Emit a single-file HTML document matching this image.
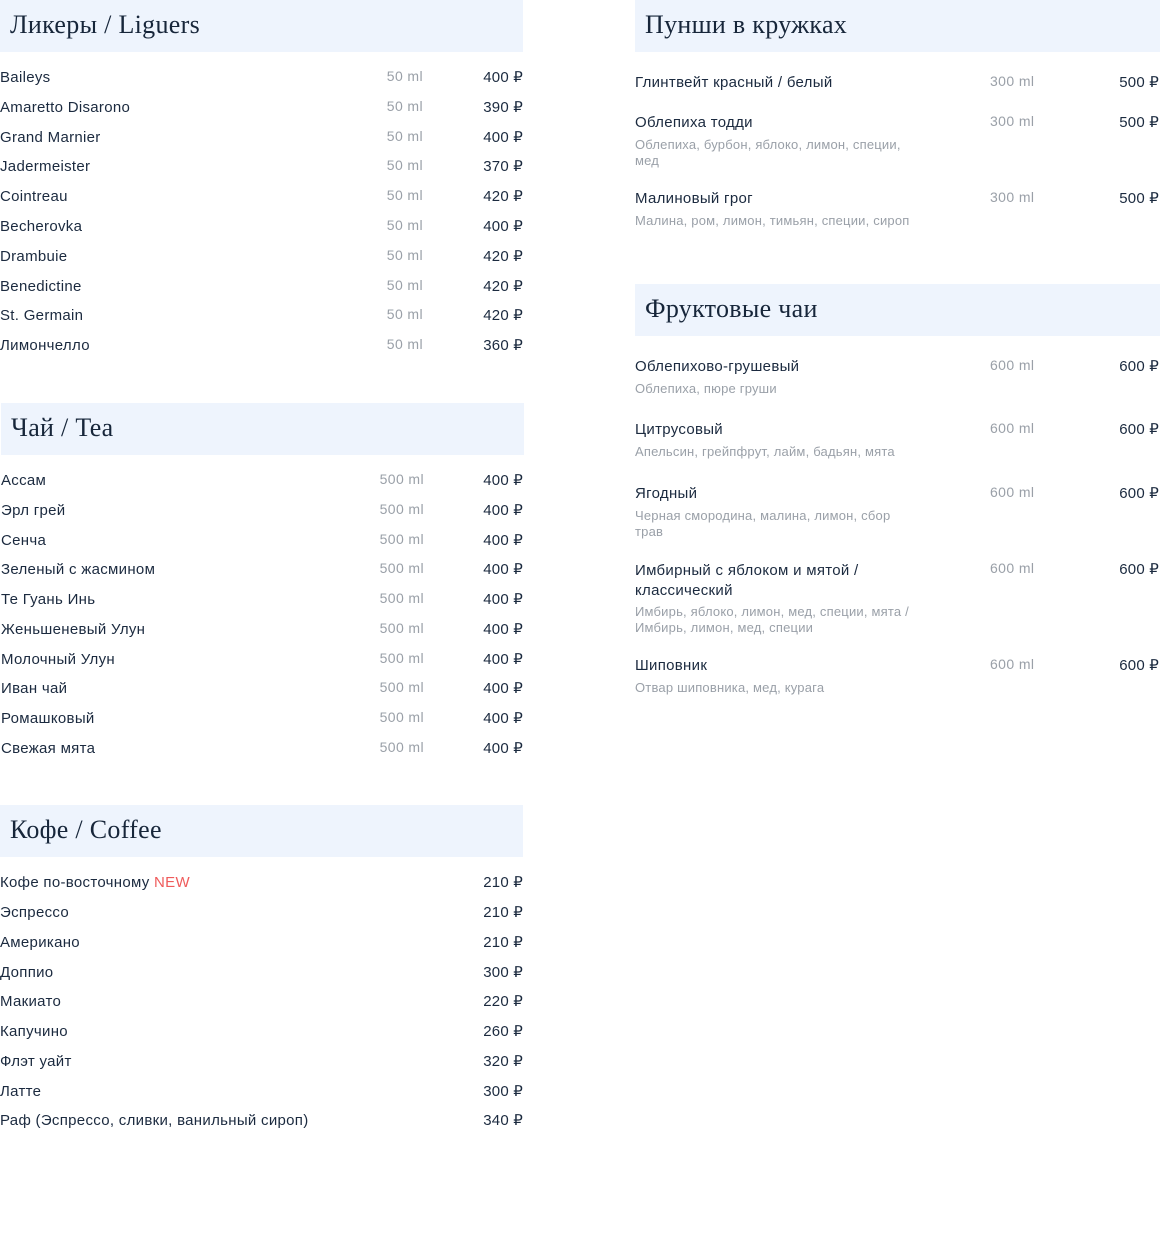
<!DOCTYPE html>
<html><head><meta charset="utf-8">
<style>
html,body{margin:0;padding:0;background:#fff;width:1160px;height:1237px;overflow:hidden;position:relative;font-family:"Liberation Sans","Noto Sans CJK SC",sans-serif;color:#1b2a3f}
.h{position:absolute;background:#eef4fd;height:52px}
.h span{position:absolute;left:10px;top:9px;font-family:"Liberation Serif","Noto Serif CJK SC",serif;font-size:26px;line-height:32px;color:#17263a;letter-spacing:0.3px}
.n{position:absolute;font-size:15px;line-height:18px;white-space:nowrap;letter-spacing:0.3px;margin-top:1px}
.m{position:absolute;font-size:14px;line-height:18px;color:#9aa0a8;white-space:nowrap;letter-spacing:0.4px;margin-top:1px}
.p{position:absolute;font-size:15px;line-height:18px;white-space:nowrap;text-align:right;margin-top:1px;letter-spacing:0.2px}
.d{position:absolute;font-size:13px;line-height:16px;color:#9aa0a8;width:276px;letter-spacing:0.2px}
.L{left:0}
.lm{right:737px}
.lp{right:637px}
.R{left:635px}
.rm{left:990px}
.rp{right:1px}
.new{color:#ef5b5b}
</style></head><body>

<div class="h" style="left:0;top:0;width:523px"><span>Ликеры / Liguers</span></div>
<div class="n L" style="top:68px">Baileys</div><div class="m lm" style="top:66px">50 ml</div><div class="p lp" style="top:68px">400 ₽</div>
<div class="n L" style="top:98px">Amaretto Disarono</div><div class="m lm" style="top:96px">50 ml</div><div class="p lp" style="top:98px">390 ₽</div>
<div class="n L" style="top:128px">Grand Marnier</div><div class="m lm" style="top:126px">50 ml</div><div class="p lp" style="top:128px">400 ₽</div>
<div class="n L" style="top:157px">Jadermeister</div><div class="m lm" style="top:155px">50 ml</div><div class="p lp" style="top:157px">370 ₽</div>
<div class="n L" style="top:187px">Cointreau</div><div class="m lm" style="top:185px">50 ml</div><div class="p lp" style="top:187px">420 ₽</div>
<div class="n L" style="top:217px">Becherovka</div><div class="m lm" style="top:215px">50 ml</div><div class="p lp" style="top:217px">400 ₽</div>
<div class="n L" style="top:247px">Drambuie</div><div class="m lm" style="top:245px">50 ml</div><div class="p lp" style="top:247px">420 ₽</div>
<div class="n L" style="top:277px">Benedictine</div><div class="m lm" style="top:275px">50 ml</div><div class="p lp" style="top:277px">420 ₽</div>
<div class="n L" style="top:306px">St. Germain</div><div class="m lm" style="top:304px">50 ml</div><div class="p lp" style="top:306px">420 ₽</div>
<div class="n L" style="top:336px">Лимончелло</div><div class="m lm" style="top:334px">50 ml</div><div class="p lp" style="top:336px">360 ₽</div>

<div class="h" style="left:1px;top:403px;width:523px"><span>Чай / Tea</span></div>
<div class="n" style="left:1px;top:471px">Ассам</div><div class="m lm" style="top:469px;right:736px">500 ml</div><div class="p lp" style="top:471px">400 ₽</div>
<div class="n" style="left:1px;top:501px">Эрл грей</div><div class="m lm" style="top:499px;right:736px">500 ml</div><div class="p lp" style="top:501px">400 ₽</div>
<div class="n" style="left:1px;top:531px">Сенча</div><div class="m lm" style="top:529px;right:736px">500 ml</div><div class="p lp" style="top:531px">400 ₽</div>
<div class="n" style="left:1px;top:560px">Зеленый с жасмином</div><div class="m lm" style="top:558px;right:736px">500 ml</div><div class="p lp" style="top:560px">400 ₽</div>
<div class="n" style="left:1px;top:590px">Те Гуань Инь</div><div class="m lm" style="top:588px;right:736px">500 ml</div><div class="p lp" style="top:590px">400 ₽</div>
<div class="n" style="left:1px;top:620px">Женьшеневый Улун</div><div class="m lm" style="top:618px;right:736px">500 ml</div><div class="p lp" style="top:620px">400 ₽</div>
<div class="n" style="left:1px;top:650px">Молочный Улун</div><div class="m lm" style="top:648px;right:736px">500 ml</div><div class="p lp" style="top:650px">400 ₽</div>
<div class="n" style="left:1px;top:679px">Иван чай</div><div class="m lm" style="top:677px;right:736px">500 ml</div><div class="p lp" style="top:679px">400 ₽</div>
<div class="n" style="left:1px;top:709px">Ромашковый</div><div class="m lm" style="top:707px;right:736px">500 ml</div><div class="p lp" style="top:709px">400 ₽</div>
<div class="n" style="left:1px;top:739px">Свежая мята</div><div class="m lm" style="top:737px;right:736px">500 ml</div><div class="p lp" style="top:739px">400 ₽</div>

<div class="h" style="left:0;top:805px;width:523px"><span>Кофе / Coffee</span></div>
<div class="n L" style="top:873px">Кофе по-восточному <span class="new">NEW</span></div><div class="p lp" style="top:873px">210 ₽</div>
<div class="n L" style="top:903px">Эспрессо</div><div class="p lp" style="top:903px">210 ₽</div>
<div class="n L" style="top:933px">Американо</div><div class="p lp" style="top:933px">210 ₽</div>
<div class="n L" style="top:963px">Доппио</div><div class="p lp" style="top:963px">300 ₽</div>
<div class="n L" style="top:992px">Макиато</div><div class="p lp" style="top:992px">220 ₽</div>
<div class="n L" style="top:1022px">Капучино</div><div class="p lp" style="top:1022px">260 ₽</div>
<div class="n L" style="top:1052px">Флэт уайт</div><div class="p lp" style="top:1052px">320 ₽</div>
<div class="n L" style="top:1082px">Латте</div><div class="p lp" style="top:1082px">300 ₽</div>
<div class="n L" style="top:1111px">Раф (Эспрессо, сливки, ванильный сироп)</div><div class="p lp" style="top:1111px">340 ₽</div>

<div class="h" style="left:635px;top:0;width:525px"><span>Пунши в кружках</span></div>
<div class="n R" style="top:73px">Глинтвейт красный / белый</div><div class="m rm" style="top:71px">300 ml</div><div class="p rp" style="top:73px">500 ₽</div>
<div class="n R" style="top:113px">Облепиха тодди</div><div class="m rm" style="top:111px">300 ml</div><div class="p rp" style="top:113px">500 ₽</div>
<div class="d R" style="top:137px">Облепиха, бурбон, яблоко, лимон, специи, мед</div>
<div class="n R" style="top:189px">Малиновый грог</div><div class="m rm" style="top:187px">300 ml</div><div class="p rp" style="top:189px">500 ₽</div>
<div class="d R" style="top:213px">Малина, ром, лимон, тимьян, специи, сироп</div>

<div class="h" style="left:635px;top:284px;width:525px"><span>Фруктовые чаи</span></div>
<div class="n R" style="top:357px">Облепихово-грушевый</div><div class="m rm" style="top:355px">600 ml</div><div class="p rp" style="top:357px">600 ₽</div>
<div class="d R" style="top:381px">Облепиха, пюре груши</div>
<div class="n R" style="top:420px">Цитрусовый</div><div class="m rm" style="top:418px">600 ml</div><div class="p rp" style="top:420px">600 ₽</div>
<div class="d R" style="top:444px">Апельсин, грейпфрут, лайм, бадьян, мята</div>
<div class="n R" style="top:484px">Ягодный</div><div class="m rm" style="top:482px">600 ml</div><div class="p rp" style="top:484px">600 ₽</div>
<div class="d R" style="top:508px">Черная смородина, малина, лимон, сбор трав</div>
<div class="n R" style="top:560px;line-height:20px;width:260px;white-space:normal">Имбирный с яблоком и мятой / классический</div><div class="m rm" style="top:558px">600 ml</div><div class="p rp" style="top:560px">600 ₽</div>
<div class="d R" style="top:604px">Имбирь, яблоко, лимон, мед, специи, мята / Имбирь, лимон, мед, специи</div>
<div class="n R" style="top:656px">Шиповник</div><div class="m rm" style="top:654px">600 ml</div><div class="p rp" style="top:656px">600 ₽</div>
<div class="d R" style="top:680px">Отвар шиповника, мед, курага</div>

</body></html>
